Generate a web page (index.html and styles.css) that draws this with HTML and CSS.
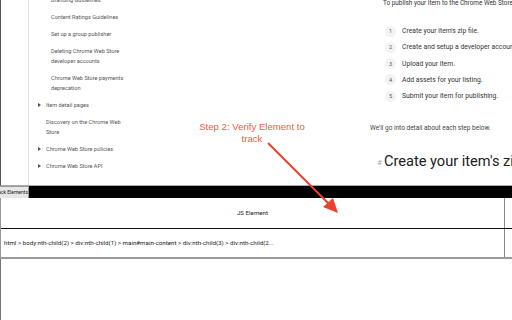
FILE: index.html
```html
<!DOCTYPE html>
<html>
<head>
<meta charset="utf-8">
<link rel="stylesheet" href="styles.css">
</head>
<body>
<div class="frame">
  <div class="docs">
    <div class="gutter"></div>
    <nav class="sidenav">
      <ul class="navlist">
        <li class="sub">Branding Guidelines</li>
        <li class="sub">Content Ratings Guidelines</li>
        <li class="sub">Set up a group publisher</li>
        <li class="sub">Deleting Chrome Web Store<br>developer accounts</li>
        <li class="sub">Chrome Web Store payments<br>deprecation</li>
        <li class="top"><span class="caret"></span>Item detail pages</li>
        <li class="top">Discovery on the Chrome Web<br>Store</li>
        <li class="top"><span class="caret"></span>Chrome Web Store policies</li>
        <li class="top"><span class="caret"></span>Chrome Web Store API</li>
      </ul>
    </nav>
    <main class="content">
      <p class="intro">To publish your item to the Chrome Web Store, follow these steps:</p>
      <ol class="steps">
        <li><span class="num">1</span>Create your item's zip file.</li>
        <li><span class="num">2</span>Create and setup a developer account.</li>
        <li><span class="num">3</span>Upload your item.</li>
        <li><span class="num">4</span>Add assets for your listing.</li>
        <li><span class="num">5</span>Submit your item for publishing.</li>
      </ol>
      <p class="detail">We'll go into detail about each step below.</p>
      <h2 class="heading"><span class="hash">#</span>Create your item's zip file</h2>
    </main>
  </div>
  <div class="tracker">
    <div class="tabbar"><span class="tab">Track Elements</span></div>
    <div class="table">
      <div class="row head">
        <div class="cell main-cell">JS Element</div>
        <div class="cell side-cell"></div>
      </div>
      <div class="row data">
        <div class="cell main-cell">html &gt; body:nth-child(2) &gt; div:nth-child(1) &gt; main#main-content &gt; div:nth-child(3) &gt; div:nth-child(2...</div>
        <div class="cell side-cell"></div>
      </div>
    </div>
  </div>
</div>
<div class="callout">Step 2: Verify Element to<br>track</div>
<svg class="arrow" width="512" height="320" viewBox="0 0 512 320">
  <line x1="268" y1="143" x2="330" y2="205" stroke="#e8432c" stroke-width="2"/>
  <polygon points="338,213 323,207 333,198" fill="#e8432c"/>
</svg>
</body>
</html>
```
FILE: styles.css
```css
html, body {
  margin: 0;
  padding: 0;
  background: #fff;
}
body {
  width: 512px;
  height: 320px;
  overflow: hidden;
  position: relative;
  font-family: Roboto, "Liberation Sans", sans-serif;
}
.frame {
  height: 320px;
  border-left: 1px solid #777;
  box-sizing: border-box;
}
.docs {
  display: flex;
  height: 186px;
  overflow: hidden;
  border-left: 1px solid #555;
  margin-left: -1px;
  border-bottom: 1px solid #aaa;
  box-sizing: border-box;
}
.gutter {
  width: 27px;
  flex: none;
}
.sidenav {
  width: 150px;
  flex: none;
  border-left: 1px solid #e4e4e4;
  overflow: hidden;
}
.navlist {
  list-style: none;
  margin: -8.5px 0 0 0;
  padding: 0;
  font-size: 5.6px;
  color: #555;
}
.navlist li {
  line-height: 10px;
  padding: 3.5px 0;
  white-space: nowrap;
}
.navlist .sub {
  padding-left: 22px;
}
.navlist .top {
  padding-left: 17px;
  position: relative;
}
.caret {
  position: absolute;
  left: 9px;
  top: 6.5px;
  width: 0;
  height: 0;
  border-left: 3px solid #555;
  border-top: 2.5px solid transparent;
  border-bottom: 2.5px solid transparent;
}
.content {
  flex: 1;
  padding-left: 191px;
  min-width: 0;
  white-space: nowrap;
  color: #333;
}
.intro {
  margin: -2px 0 0 13px;
  font-size: 6.4px;
  line-height: 10px;
}
.steps {
  list-style: none;
  margin: 15px 0 0 15px;
  padding: 0;
  font-size: 6.8px;
}
.steps li {
  display: flex;
  align-items: center;
  height: 16.25px;
}
.num {
  flex: none;
  width: 11px;
  height: 11px;
  margin-right: 6px;
  border-radius: 50%;
  background: #f3f3f3;
  color: #555;
  font-size: 5.5px;
  display: flex;
  align-items: center;
  justify-content: center;
}
.detail {
  margin: 19px 0 0 0;
  font-size: 6.5px;
  line-height: 10px;
  color: #444;
}
.heading {
  margin: 18px 0 0 7px;
  font-size: 14.6px;
  font-weight: 400;
  line-height: 20px;
  color: #202124;
}
.hash {
  font-size: 8px;
  color: #aaa;
  margin-right: 2px;
  vertical-align: 1px;
}
.tabbar {
  height: 12px;
  background: #000;
  display: flex;
  align-items: stretch;
  margin-left: -1px;
}
.tab {
  width: 29px;
  overflow: hidden;
  background: #e6e6e6;
  color: #222;
  font-size: 5px;
  line-height: 10px;
  direction: rtl;
  text-align: left;
  white-space: nowrap;
  border-top: 1px solid #999;
  border-right: 1px solid #999;
  box-sizing: border-box;
}
.table {
  border-left: 1px solid #999;
  margin-left: -1px;
}
.row {
  display: flex;
}
.row.head {
  height: 30px;
  border-bottom: 1px solid #111;
}
.row.data {
  height: 28px;
  border-bottom: 2px solid #999;
}
.cell {
  display: flex;
  align-items: center;
  font-size: 6.2px;
  color: #222;
  white-space: nowrap;
  overflow: hidden;
}
.main-cell {
  width: 504px;
  flex: none;
  border-right: 1px solid #888;
  box-sizing: border-box;
}
.head .main-cell {
  justify-content: center;
}
.data .main-cell {
  padding-left: 3px;
}
.side-cell {
  flex: 1;
}
.callout {
  position: absolute;
  left: 196px;
  top: 121px;
  width: 112px;
  text-align: center;
  font-family: "Liberation Sans", Arial, sans-serif;
  font-size: 9.6px;
  line-height: 12px;
  color: #f25a48;
  white-space: nowrap;
}
.arrow {
  position: absolute;
  left: 0;
  top: 0;
}
```
